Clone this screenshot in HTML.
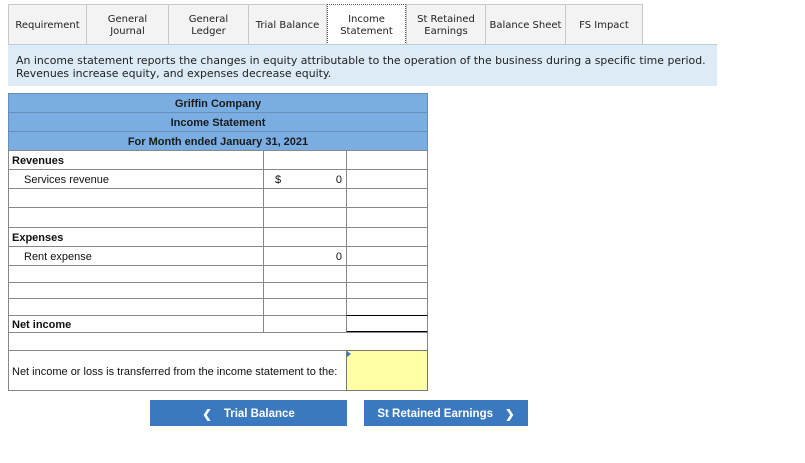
<!DOCTYPE html>
<html><head><style>
body{margin:0;width:805px;height:463px;background:#fff;position:relative;font-family:"Liberation Sans",Arial,sans-serif;overflow:hidden}
.tab{position:absolute;top:4px;height:40px;background:#f3f3f3;border:1px solid #c8c8c8;border-bottom:none;font-family:"DejaVu Sans",Verdana,sans-serif;font-size:10px;color:#222;display:flex;align-items:center;justify-content:center;text-align:center;line-height:12px;box-sizing:border-box;padding-top:2px}
.sel{background:#fff;border:1px dotted #555;border-bottom:none;height:41px}
.info{position:absolute;left:8px;top:44px;width:709px;height:42px;background:#dcebf6;border-top:1px solid #b9cfe0;box-sizing:border-box;font-family:"DejaVu Sans",Verdana,sans-serif;font-size:10.9px;color:#222;padding:9px 0 0 8px;line-height:13px}
.c{position:absolute;box-sizing:border-box;border:1px solid #888;font-size:11px;color:#111;display:flex;align-items:center;padding-top:2px}
.h{background:#7aaee3;justify-content:center;font-weight:bold;color:#1a1a1a;border-color:#6a8fb5}
.btn{position:absolute;top:400px;height:26px;background:#3a78bf;color:#fff;font-weight:bold;font-size:11.5px;display:flex;align-items:center;justify-content:center;padding-top:1px;box-sizing:border-box}
</style></head><body>
<div class="tab" style="left:8px;width:79px">Requirement</div>
<div class="tab" style="left:86px;width:83px">General<br>Journal</div>
<div class="tab" style="left:168px;width:81px">General<br>Ledger</div>
<div class="tab" style="left:248px;width:79px">Trial Balance</div>
<div class="tab sel" style="left:327px;width:79px">Income<br>Statement</div>
<div class="tab" style="left:406px;width:80px">St Retained<br>Earnings</div>
<div class="tab" style="left:485px;width:81px">Balance Sheet</div>
<div class="tab" style="left:565px;width:78px">FS Impact</div>
<div class="info">An income statement reports the changes in equity attributable to the operation of the business during a specific time period.<br>Revenues increase equity, and expenses decrease equity.</div>

<div class="c h" style="left:8px;top:93px;width:420px;height:20px">Griffin Company</div>
<div class="c h" style="left:8px;top:112px;width:420px;height:20px">Income Statement</div>
<div class="c h" style="left:8px;top:131px;width:420px;height:20px">For Month ended January 31, 2021</div>

<div class="c" style="left:8px;top:150px;width:256px;height:20px;padding-left:3px;font-weight:bold">Revenues</div>
<div class="c" style="left:263px;top:150px;width:84px;height:20px"></div>
<div class="c" style="left:346px;top:150px;width:82px;height:20px"></div>

<div class="c" style="left:8px;top:169px;width:256px;height:20px;padding-left:15px">Services revenue</div>
<div class="c" style="left:263px;top:169px;width:84px;height:20px;justify-content:space-between;padding:2px 4px 0 11px"><span>$</span><span>0</span></div>
<div class="c" style="left:346px;top:169px;width:82px;height:20px"></div>

<div class="c" style="left:8px;top:188px;width:256px;height:20px"></div>
<div class="c" style="left:263px;top:188px;width:84px;height:20px"></div>
<div class="c" style="left:346px;top:188px;width:82px;height:20px"></div>

<div class="c" style="left:8px;top:207px;width:256px;height:21px"></div>
<div class="c" style="left:263px;top:207px;width:84px;height:21px"></div>
<div class="c" style="left:346px;top:207px;width:82px;height:21px"></div>

<div class="c" style="left:8px;top:227px;width:256px;height:20px;padding-left:3px;font-weight:bold">Expenses</div>
<div class="c" style="left:263px;top:227px;width:84px;height:20px"></div>
<div class="c" style="left:346px;top:227px;width:82px;height:20px"></div>

<div class="c" style="left:8px;top:246px;width:256px;height:20px;padding-left:15px">Rent expense</div>
<div class="c" style="left:263px;top:246px;width:84px;height:20px;justify-content:flex-end;padding-right:4px">0</div>
<div class="c" style="left:346px;top:246px;width:82px;height:20px"></div>

<div class="c" style="left:8px;top:265px;width:256px;height:18px"></div>
<div class="c" style="left:263px;top:265px;width:84px;height:18px"></div>
<div class="c" style="left:346px;top:265px;width:82px;height:18px"></div>

<div class="c" style="left:8px;top:282px;width:256px;height:17px"></div>
<div class="c" style="left:263px;top:282px;width:84px;height:17px"></div>
<div class="c" style="left:346px;top:282px;width:82px;height:17px"></div>

<div class="c" style="left:8px;top:298px;width:256px;height:18px"></div>
<div class="c" style="left:263px;top:298px;width:84px;height:18px"></div>
<div class="c" style="left:346px;top:298px;width:82px;height:18px"></div>

<div class="c" style="left:8px;top:315px;width:256px;height:18px;padding-left:3px;font-weight:bold">Net income</div>
<div class="c" style="left:263px;top:315px;width:84px;height:18px"></div>
<div class="c" style="left:346px;top:315px;width:82px;height:18px;border-top:1px solid #000;border-bottom:2px solid #000"></div>

<div class="c" style="left:8px;top:332px;width:420px;height:19px;border-bottom:1px solid #000"></div>
<div class="c" style="left:8px;top:350px;width:339px;height:41px;padding-left:3px;align-items:flex-end;padding-bottom:12px">Net income or loss is transferred from the income statement to the:</div>
<div class="c" style="left:346px;top:350px;width:82px;height:41px;background:#ffffa6;border-color:#777"></div>
<div style="position:absolute;left:347px;top:351px;width:0;height:0;border-left:4px solid #3a78bf;border-top:3px solid transparent;border-bottom:3px solid transparent"></div>

<div class="btn" style="left:150px;width:197px"><span style="margin-right:12px">&#10094;</span>Trial Balance</div>
<div class="btn" style="left:364px;width:164px">St Retained Earnings<span style="margin-left:12px">&#10095;</span></div>
</body></html>
